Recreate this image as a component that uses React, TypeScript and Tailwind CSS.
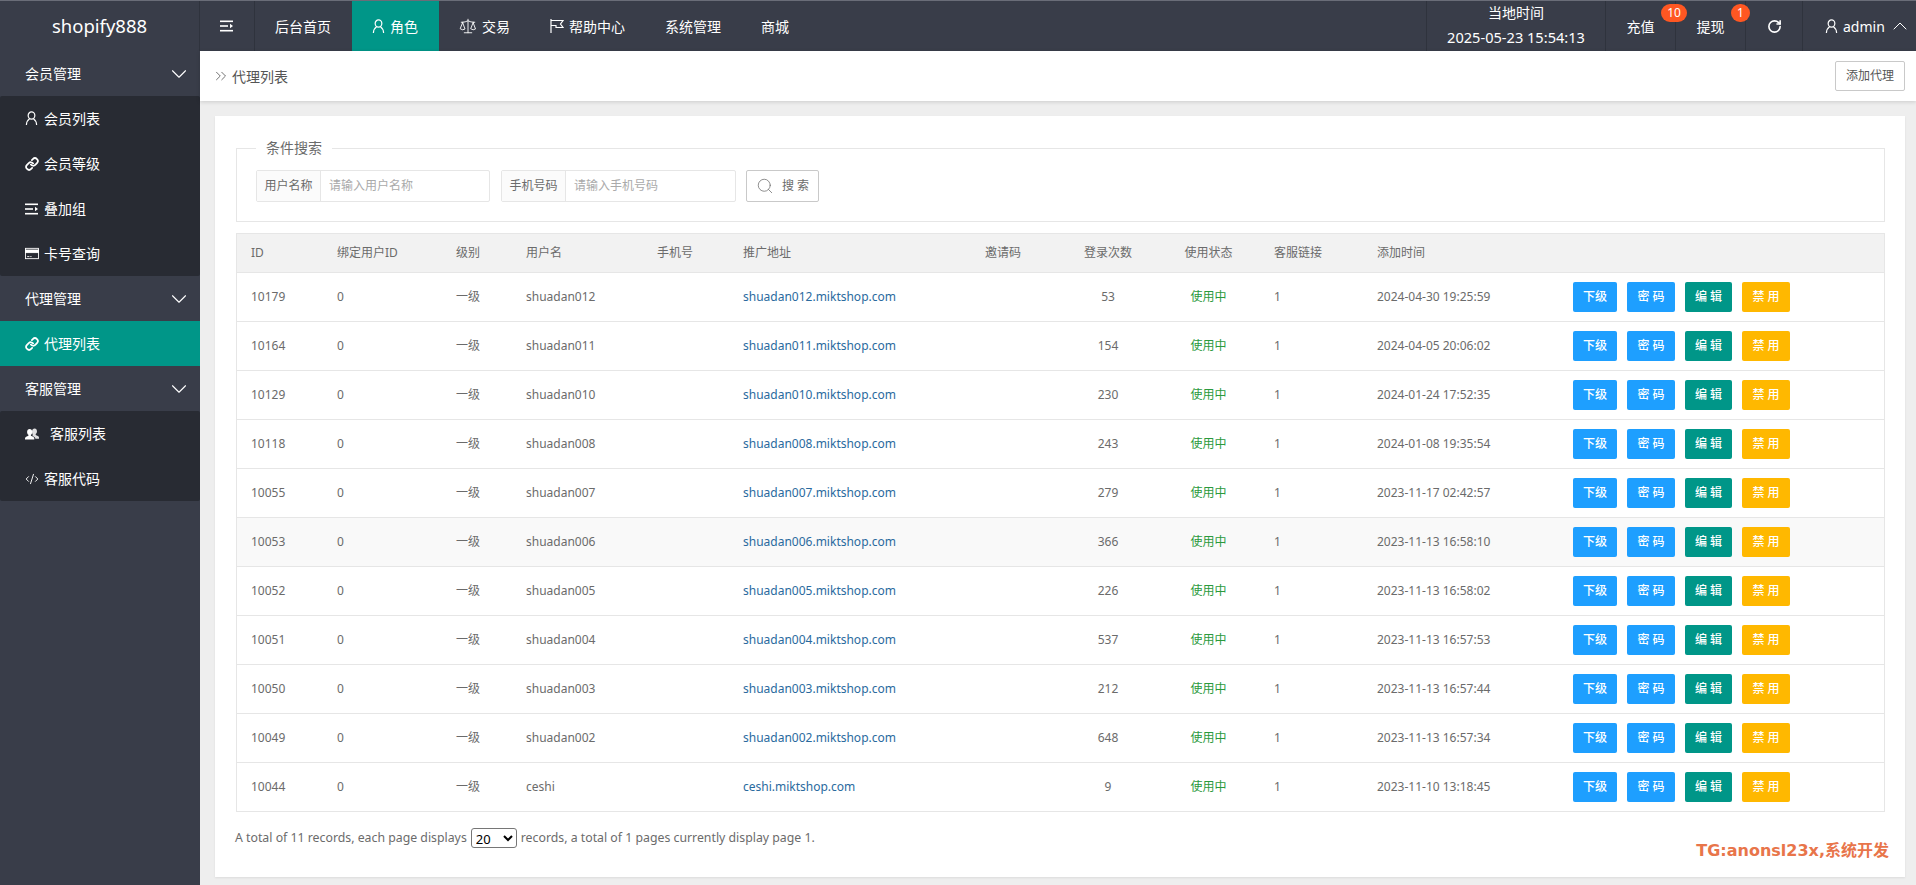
import { ChevronDown, ChevronUp, ChevronsRight, CodeXml, Link, RotateCw, Scale, Search } from "lucide-react";

const font = "font-['Noto_Sans','Noto_Sans_CJK_SC',sans-serif]";

const rows = [
  ["10179", "shuadan012", "53", "2024-04-30 19:25:59"],
  ["10164", "shuadan011", "154", "2024-04-05 20:06:02"],
  ["10129", "shuadan010", "230", "2024-01-24 17:52:35"],
  ["10118", "shuadan008", "243", "2024-01-08 19:35:54"],
  ["10055", "shuadan007", "279", "2023-11-17 02:42:57"],
  ["10053", "shuadan006", "366", "2023-11-13 16:58:10"],
  ["10052", "shuadan005", "226", "2023-11-13 16:58:02"],
  ["10051", "shuadan004", "537", "2023-11-13 16:57:53"],
  ["10050", "shuadan003", "212", "2023-11-13 16:57:44"],
  ["10049", "shuadan002", "648", "2023-11-13 16:57:34"],
  ["10044", "ceshi", "9", "2023-11-10 13:18:45"],
];

const UserIcon = ({ className = "" }: { className?: string }) => (
  <svg viewBox="0 0 14 16" fill="none" stroke="currentColor" strokeWidth="1.3" className={className}>
    <ellipse cx="7" cy="4.8" rx="3.6" ry="3.9" />
    <path d="M1.5 15c.2-3.4 1.6-5.4 3.4-6.6M12.5 15c-.2-3.4-1.6-5.4-3.4-6.6" />
  </svg>
);

const AlignIcon = ({ className = "" }: { className?: string }) => (
  <svg viewBox="0 0 14 12" fill="currentColor" className={className}>
    <rect x="0" y="0.5" width="13" height="1.6" />
    <rect x="0" y="5.2" width="8" height="1.6" />
    <path d="M10 3.8 13 6l-3 2.2z" />
    <rect x="0" y="9.9" width="13" height="1.6" />
  </svg>
);

const CardIcon = () => (
  <svg viewBox="0 0 16 13" className="h-[13px] w-[16px]" fill="none" stroke="currentColor">
    <rect x="0.6" y="0.6" width="14.8" height="11.8" />
    <rect x="0.6" y="2.5" width="14.8" height="3" fill="currentColor" />
    <path d="M2.5 10h2.5M6 10h1.5" />
  </svg>
);

const UsersIcon = () => (
  <svg viewBox="0 0 18 14" fill="currentColor" className="h-[14px] w-[18px]">
    <path d="M12.4 0c1.9 0 3 1.500 3 3.500 0 1.600-.7 2.900-1.600 3.600v1.100c1.600.6 4.200 1.400 4.200 3.200V13h-4.600c-.3-1.800-2-2.800-3.600-3.500V7.300C9.300 6.500 9 5.300 9 3.500 9 1.500 10.500 0 12.400 0z" opacity=".85" />
    <path d="M6 .6c2 0 3.300 1.500 3.300 3.700 0 1.700-.7 3-1.700 3.800v1.200C9.400 10.100 12 10.900 12 12.800V14H0v-1.200c0-1.900 2.600-2.700 4.400-3.500V8.100C3.400 7.300 2.700 6 2.700 4.300 2.700 2.100 4 .6 6 .6z" />
  </svg>
);

const FlagIcon = () => (
  <svg viewBox="0 0 14 14" fill="none" stroke="currentColor" strokeWidth="1.2" className="h-[14px] w-[14px]">
    <path d="M1 0v14M1 1.500h12L10.500 5 13 8.500H6V6.500H1" />
  </svg>
);

function SideHeader({ label }: { label: string }) {
  return (
    <div className="flex h-[45px] items-center justify-between pl-[25px] pr-[8px]">
      <span>{label}</span>
      <ChevronDown size={26} strokeWidth={1} />
    </div>
  );
}

function SideItem({ icon, label, active, gap = "gap-[5px]" }: { icon: React.ReactNode; label: string; active?: boolean; gap?: string }) {
  return (
    <div className={`flex h-[45px] items-center pl-[25px] ${gap} ${active ? "bg-[#009688]" : ""}`}>
      <span className="flex w-[14px] shrink-0 justify-start overflow-visible">{icon}</span>
      <span>{label}</span>
    </div>
  );
}

function Sidebar() {
  return (
    <aside className="w-[200px] shrink-0 bg-[#393d49] text-[14px] text-white">
      <SideHeader label="会员管理" />
      <div className="rounded-[2px] bg-[#282b33]">
        <SideItem icon={<UserIcon className="h-[15px] w-[13px]" />} label="会员列表" />
        <SideItem icon={<Link size={14} strokeWidth={3} />} label="会员等级" />
        <SideItem icon={<AlignIcon className="h-[12px] w-[14px]" />} label="叠加组" />
        <SideItem icon={<CardIcon />} label="卡号查询" />
      </div>
      <SideHeader label="代理管理" />
      <SideItem icon={<Link size={14} strokeWidth={3} />} label="代理列表" active />
      <SideHeader label="客服管理" />
      <div className="rounded-[2px] bg-[#282b33]">
        <SideItem icon={<UsersIcon />} label="客服列表" gap="gap-[11px]" />
        <SideItem icon={<CodeXml size={14} strokeWidth={1.6} />} label="客服代码" />
      </div>
    </aside>
  );
}

function NavItem({ icon, label, active, className = "" }: { icon?: React.ReactNode; label: string; active?: boolean; className?: string }) {
  return (
    <div className={`flex h-full items-center gap-[5px] px-5 ${active ? "bg-[#009688]" : ""} ${className}`}>
      {icon}
      <span>{label}</span>
    </div>
  );
}

function TopBar() {
  return (
    <header className="flex h-[51px] shrink-0 border-t border-t-[#6a6d78] bg-[#393d49] text-[14px] text-white">
      <div className="flex w-[200px] items-center justify-center border-r border-r-[#2f333d] text-[18.5px]">shopify888</div>
      <div className="flex w-[55px] items-center justify-center border-r border-r-[#2f333d]">
        <AlignIcon className="h-[12px] w-[14px]" />
      </div>
      <NavItem label="后台首页" className="w-[97px]" />
      <NavItem label="角色" active className="w-[87px]" icon={<UserIcon className="h-[15px] w-[13px]" />} />
      <NavItem label="交易" icon={<Scale size={18} strokeWidth={1.2} />} />
      <NavItem label="帮助中心" icon={<FlagIcon />} />
      <NavItem label="系统管理" />
      <NavItem label="商城" />
      <div className="ml-auto flex h-full">
        <div className="flex w-[180px] flex-col items-center justify-center gap-[4px] border-x border-x-[#2f333d] pb-[3px] leading-[20px]">
          <span>当地时间</span>
          <span className="text-[14.6px]">2025-05-23 15:54:13</span>
        </div>
        <div className="relative flex w-[70px] items-center justify-center border-r border-r-[#2f333d]">
          充值
          <span className="absolute left-[55px] top-[3px] flex h-[18px] w-[26px] items-center justify-center rounded-full bg-[#ff5722] text-[12px]">10</span>
        </div>
        <div className="relative flex w-[70px] items-center justify-center border-r border-r-[#2f333d]">
          提现
          <span className="absolute left-[55px] top-[3px] flex h-[18px] w-[19px] items-center justify-center rounded-full bg-[#ff5722] text-[12px]">1</span>
        </div>
        <div className="flex w-[57px] items-center justify-center border-r border-r-[#2f333d]">
          <RotateCw size={15} strokeWidth={2.6} />
        </div>
        <div className="flex w-[113px] items-center gap-[5px] pl-[22px]">
          <UserIcon className="h-[15px] w-[13px]" />
          <span>admin</span>
          <ChevronUp size={24} strokeWidth={1} className="-ml-[2px]" />
        </div>
      </div>
    </header>
  );
}

function InputGroup({ label, placeholder, width }: { label: string; placeholder: string; width: string }) {
  return (
    <div className={`flex h-[32px] rounded-[2px] border border-[#e6e6e6] ${width}`}>
      <span className="flex w-[64px] shrink-0 items-center justify-center border-r border-r-[#e6e6e6] bg-[#fbfbfb]">{label}</span>
      <input placeholder={placeholder} className="min-w-0 flex-1 pl-2 outline-none placeholder:text-[#aaa]" />
    </div>
  );
}

function ActionButtons() {
  const base = "flex h-[30px] items-center justify-center rounded-[2px] text-[12px] font-medium text-white";
  return (
    <div className="flex gap-[10px]">
      <span className={`${base} w-[44px] bg-[#1e9fff]`}>下级</span>
      <span className={`${base} w-[48px] bg-[#1e9fff]`}>密 码</span>
      <span className={`${base} w-[47px] bg-[#009688]`}>编 辑</span>
      <span className={`${base} w-[48px] bg-[#ffb800]`}>禁 用</span>
    </div>
  );
}

export default function App() {
  return (
    <div className={`${font} flex h-screen flex-col overflow-hidden bg-[#eeeeee] text-[12px] text-[#6b6b6b]`}>
      <TopBar />
      <div className="flex min-h-0 flex-1">
        <Sidebar />
        <main className="flex min-w-0 flex-1 flex-col">
          <div className="flex h-[50px] shrink-0 items-center justify-between bg-white pl-[12px] pr-[11px] shadow-[0_1px_4px_rgba(0,0,0,0.15)]">
            <div className="flex items-center gap-[2px] text-[14px] text-[#555]">
              <ChevronsRight size={18} strokeWidth={1.1} />
              <span>代理列表</span>
            </div>
            <button className="h-[30px] w-[70px] rounded-[2px] border border-[#c9c9c9] bg-white text-[#555]">添加代理</button>
          </div>
          <div className="flex min-h-0 flex-1 flex-col pb-2 pl-[15px] pr-[11px] pt-[15px]">
            <div className="relative flex-1 bg-white pl-[21px] pr-[20px] pt-[22px] shadow-[0_1px_2px_rgba(0,0,0,0.08)]">
              <fieldset className="border border-[#e6e6e6] pb-[19px] pl-[19px] pt-[12px]">
                <legend className="px-[10px] text-[14px] leading-[20px]">条件搜索</legend>
                <div className="flex gap-[11px]">
                  <InputGroup label="用户名称" placeholder="请输入用户名称" width="w-[234px]" />
                  <InputGroup label="手机号码" placeholder="请输入手机号码" width="w-[235px]" />
                  <button className="-ml-px flex h-[32px] w-[73px] items-center justify-center gap-[8px] rounded-[2px] border border-[#c9c9c9]">
                    <Search size={18} strokeWidth={1} />
                    <span>搜 索</span>
                  </button>
                </div>
              </fieldset>
              <div className="mt-[11px] border-x border-t border-[#e6e6e6]">
                <table className="w-full table-fixed border-separate border-spacing-0">
                  <thead>
                    <tr className="bg-[#f2f2f2]">
                      <th className="h-[39px] w-[85px] border-b border-b-[#e6e6e6] pl-[14px] pr-[15px] text-left font-normal">ID</th>
                      <th className="w-[119px] border-b border-b-[#e6e6e6] px-[15px] text-left font-normal">绑定用户ID</th>
                      <th className="w-[70px] border-b border-b-[#e6e6e6] px-[15px] text-left font-normal">级别</th>
                      <th className="w-[131px] border-b border-b-[#e6e6e6] px-[15px] text-left font-normal">用户名</th>
                      <th className="w-[86px] border-b border-b-[#e6e6e6] px-[15px] text-left font-normal">手机号</th>
                      <th className="w-[242px] border-b border-b-[#e6e6e6] px-[15px] text-left font-normal">推广地址</th>
                      <th className="w-[88px] border-b border-b-[#e6e6e6] px-[15px] text-left font-normal">邀请码</th>
                      <th className="w-[100px] border-b border-b-[#e6e6e6] text-center font-normal">登录次数</th>
                      <th className="w-[101px] border-b border-b-[#e6e6e6] text-center font-normal">使用状态</th>
                      <th className="w-[103px] border-b border-b-[#e6e6e6] px-[15px] text-left font-normal">客服链接</th>
                      <th className="w-[196px] border-b border-b-[#e6e6e6] px-[15px] text-left font-normal">添加时间</th>
                      <th className="border-b border-b-[#e6e6e6]"></th>
                    </tr>
                  </thead>
                  <tbody>
                    {rows.map((r, i) => (
                      <tr key={r[0]} className={i === 5 ? "bg-[#f9f9f9]" : ""}>
                        <td className="h-[49px] border-b border-b-[#e6e6e6] pl-[14px] pr-[15px]">{r[0]}</td>
                        <td className="border-b border-b-[#e6e6e6] px-[15px]">0</td>
                        <td className="border-b border-b-[#e6e6e6] px-[15px]">一级</td>
                        <td className="border-b border-b-[#e6e6e6] px-[15px]">{r[1]}</td>
                        <td className="border-b border-b-[#e6e6e6] px-[15px]"></td>
                        <td className="border-b border-b-[#e6e6e6] px-[15px] text-[#2a6a9e]">{r[1]}.miktshop.com</td>
                        <td className="border-b border-b-[#e6e6e6] px-[15px]"></td>
                        <td className="border-b border-b-[#e6e6e6] text-center">{r[2]}</td>
                        <td className="border-b border-b-[#e6e6e6] text-center text-[#2b9a3c]">使用中</td>
                        <td className="border-b border-b-[#e6e6e6] px-[15px]">1</td>
                        <td className="border-b border-b-[#e6e6e6] px-[15px]">{r[3]}</td>
                        <td className="border-b border-b-[#e6e6e6] pl-[15px]">
                          <ActionButtons />
                        </td>
                      </tr>
                    ))}
                  </tbody>
                </table>
              </div>
              <div className="-ml-px mt-[16px] flex items-center gap-[4px] text-[12.3px]">
                <span>A total of 11 records, each page displays</span>
                <select defaultValue="20" className="h-[20px] w-[46px] rounded-[3px] border border-[#767676] text-[13px] text-black">
                  <option>20</option>
                </select>
                <span>records, a total of 1 pages currently display page 1.</span>
              </div>
              <span className="absolute bottom-[14px] right-[16px] font-['DejaVu_Sans','Noto_Sans_CJK_SC',sans-serif] text-[16px] font-bold text-[#e8754a]">TG:anonsl23x,系统开发</span>
            </div>
          </div>
        </main>
      </div>
    </div>
  );
}
